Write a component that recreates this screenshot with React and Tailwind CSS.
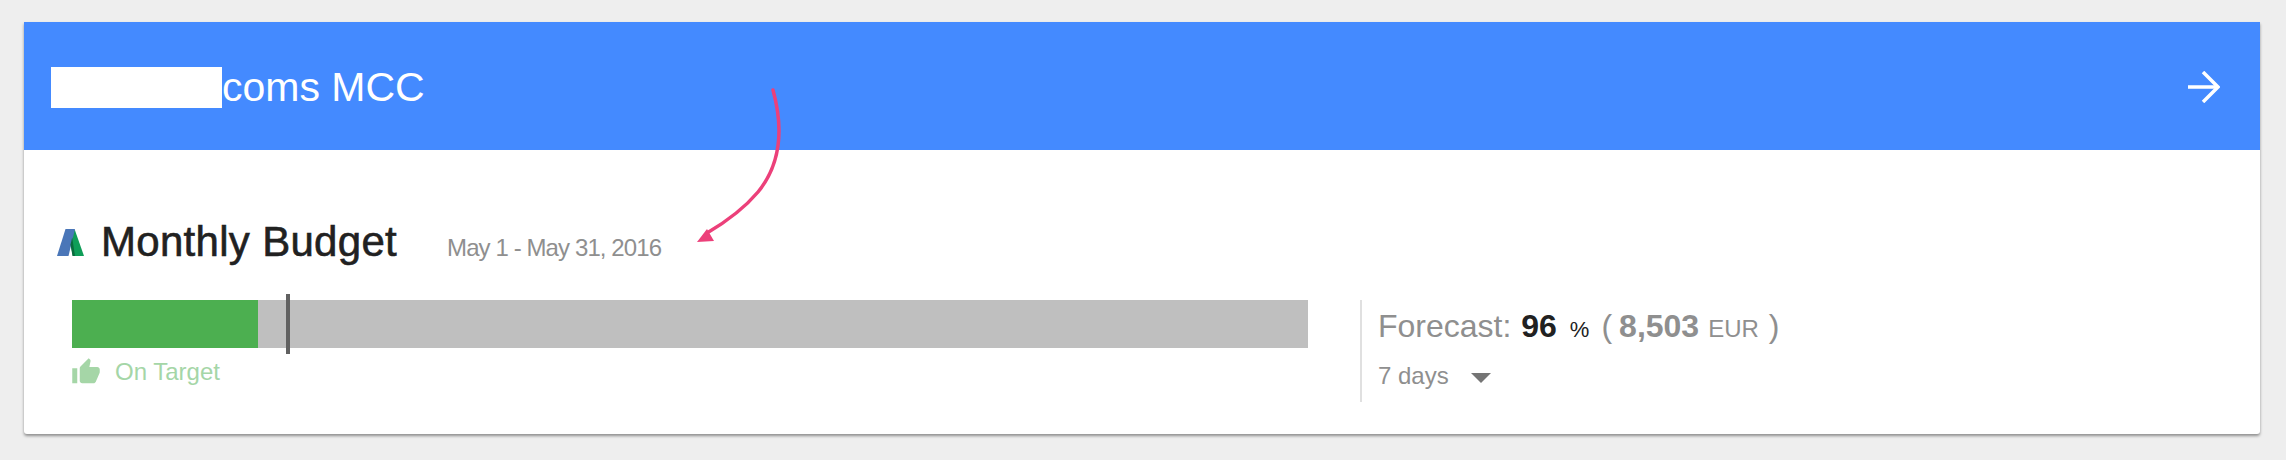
import React from "react";
import { MdThumbUp } from "react-icons/md";

const font = "font-['Liberation_Sans',Arial,sans-serif]";

function AdsLogo() {
  return (
    <svg width="27" height="27" viewBox="0 0 27 27" className="shrink-0">
      <polygon points="17.7,0.5 27,27 16,27 12,9" fill="#0f9d58" />
      <polygon points="8.5,0 18,0 11.5,27 0,27" fill="#4a76b8" />
      <polygon points="15.2,8.5 18,27 15.5,27 13.5,15.5" fill="#0a6b3c" />
    </svg>
  );
}

function PinkArrow() {
  return (
    <svg
      width="110"
      height="170"
      viewBox="0 0 110 170"
      className="absolute left-[680px] top-[80px] pointer-events-none"
    >
      <path
        d="M93 10 C104 50 100 85 78 112 C62 131 44 143 27 153"
        fill="none"
        stroke="#ec407a"
        strokeWidth="3.5"
        strokeLinecap="round"
      />
      <polygon points="17,162 27,149 34,161" fill="#ec407a" />
    </svg>
  );
}

export default function App() {
  return (
    <div className={`relative h-[460px] bg-[#eeeeee] pt-[22px] pl-[24px] ${font}`}>
      <div className="w-[2236px] h-[412px] bg-white rounded-b-[3px] shadow-[0_2px_3px_rgba(0,0,0,0.4)] overflow-hidden">
        {/* Header */}
        <div className="h-[128px] bg-[#448aff] flex items-center justify-between pt-[2px] pl-[27px] pr-[40px]">
          <div className="flex items-center">
            <span className="w-[171px] h-[41px] bg-white" />
            <span className="text-[41px] leading-none text-white">coms MCC</span>
          </div>
          <svg width="32" height="32" viewBox="0 0 32 32" fill="none" stroke="white" strokeWidth="3.5">
            <path d="M0 16 H30" />
            <path d="M15 1 L30 16 L15 31" />
          </svg>
        </div>

        {/* Title */}
        <div className="flex items-baseline mt-[71px] pl-[33px]">
          <AdsLogo />
          <h1 className="ml-[17px] text-[42px] leading-[42px] font-normal tracking-[0.3px] text-[#212121] [-webkit-text-stroke:0.6px_#212121]">
            Monthly Budget
          </h1>
          <span className="ml-[50px] text-[24px] leading-[30px] text-[#8f8f8f] tracking-[-0.9px]">
            May 1 - May 31, 2016
          </span>
        </div>

        {/* Budget and forecast */}
        <div className="flex mt-[37px] pl-[48px]">
          <div className="w-[1236px]">
            <div className="relative h-[48px] bg-[#bfbfbf]">
              <div className="h-full w-[186px] bg-[#4caf50]" />
              <div className="absolute left-[214px] top-[-6px] w-[4px] h-[60px] bg-[#616161]" />
            </div>
            <div className="flex items-center mt-[9px] text-[24px] leading-[30px] text-[#a5d6a7]">
              <MdThumbUp size={30} className="shrink-0 -ml-[1px]" />
              <span className="ml-[14px]">On Target</span>
            </div>
          </div>
          <div className="ml-[52px] w-[2px] h-[102px] bg-[#e0e0e0]" />
          <div className="ml-[16px] text-[#8f8f8f]">
            <div className="flex items-baseline text-[32px] leading-[38px] mt-[7px] whitespace-pre">
              <span>Forecast: </span>
              <b className="ml-[1px] text-[#212121]">96</b>
              <span className="ml-[13px] text-[22px] text-[#212121]">%</span>
              <span className="ml-[12px]">(</span>
              <b className="ml-[7px]">8,503</b>
              <span className="ml-[9px] text-[24px]">EUR</span>
              <span className="ml-[10px]">)</span>
            </div>
            <div className="flex items-center mt-[12px] text-[24px] leading-[30px]">
              <span>7 days</span>
              <span className="ml-[22px] mt-[3px] w-0 h-0 border-x-[10px] border-x-transparent border-t-[10px] border-t-[#757575]" />
            </div>
          </div>
        </div>
      </div>
      <PinkArrow />
    </div>
  );
}
